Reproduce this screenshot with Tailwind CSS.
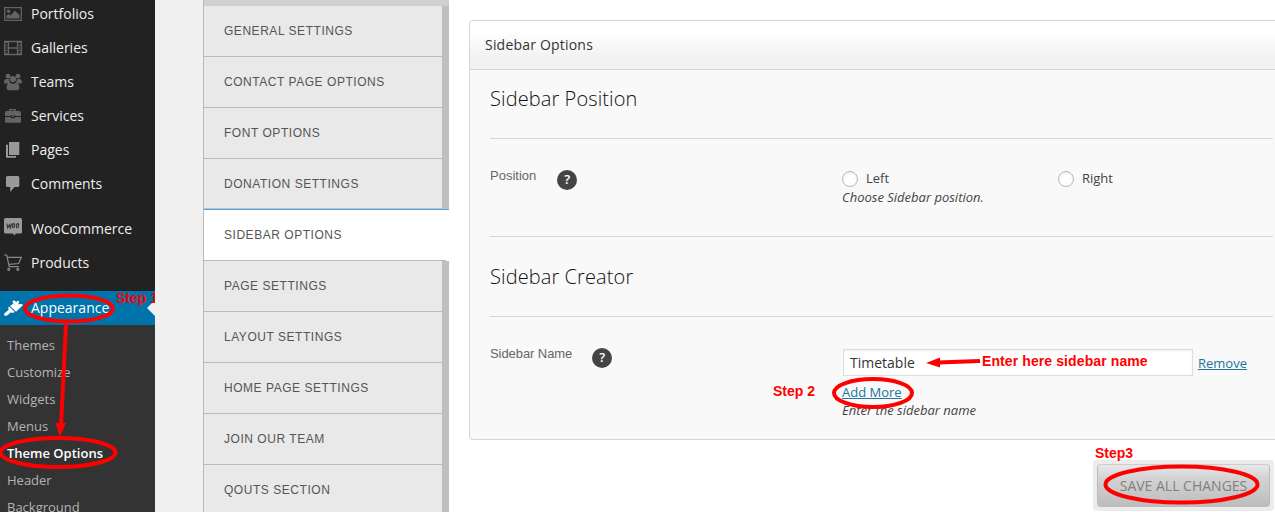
<!DOCTYPE html>
<html lang="en">
<head>
<meta charset="utf-8">
<title>Theme Options</title>
<script src="https://cdn.jsdelivr.net/npm/@tailwindcss/browser@4"></script>
</head>
<body class="relative h-[512px] w-[1275px] overflow-hidden bg-white font-['Open_Sans',sans-serif]">
<div class="flex h-full">
  <aside class="h-full w-[155px] shrink-0 overflow-hidden bg-[#222] text-sm text-[#eee]">
    <ul class="-mt-[3px]">
      <li class="flex h-[34px] items-center gap-[9px] pl-1"><svg class="size-[18px] text-[#646464]" viewBox="0 0 18 18" fill="none" stroke="currentColor"><path d="M.7 2.7h16.6v12.6H.7z" stroke-width="1.300"/><path d="M2.500 13.500v-3l2-1.500 2 1.500 4.500-5 4.500 4.500v3.500z" fill="currentColor" stroke="none"/><circle cx="4.500" cy="6.200" r="1.700" fill="currentColor" stroke="none"/></svg><span>Portfolios</span></li>
      <li class="flex h-[34px] items-center gap-[9px] pl-1"><svg class="size-[18px] text-[#646464]" viewBox="0 0 18 18" fill="none" stroke="currentColor"><path d="M.6 2.500h16.800v13H.6zM4.500 2.500v13M13.500 2.500v13M4.500 9h9" stroke-width="1.300"/><path d="M2.500 3v12M15.500 3v12" stroke-width="2.600" stroke-dasharray="1 1.700"/></svg><span>Galleries</span></li>
      <li class="flex h-[34px] items-center gap-[9px] pl-1"><svg class="size-[18px] text-[#646464]" viewBox="0 0 18 18" fill="currentColor"><circle cx="4" cy="3.200" r="2.400"/><circle cx="14" cy="3.200" r="2.400"/><circle cx="9" cy="6" r="3.100"/><path d="M0 9c0-2 1-3 3-3h2.200c-.2 2 .4 3 1.300 3.700L4 10.500H1Q0 10.500 0 9zM18 9c0-2-1-3-3-3h-2.200c.2 2-.4 3-1.300 3.700l2.500.8h3q1 0 1-1.500zM2.600 15c0-3 .9-4.800 3.300-5.200 2 1.300 4.200 1.300 6.200 0 2.400.4 3.300 2.200 3.300 5.200 0 1.300-.9 2.200-2.200 2.200H4.800c-1.300 0-2.200-.9-2.200-2.200z"/></svg><span>Teams</span></li>
      <li class="flex h-[34px] items-center gap-[9px] pl-1"><svg class="size-[18px] text-[#646464]" viewBox="0 0 18 18" fill="currentColor"><path d="M5 4V2.600Q5 2 5.700 2h5.600q.7 0 .7.600V4h3.500Q17 4 17 5.500V9h-5.500v-.500h-5V9H1V5.500Q1 4 2.500 4zM6.300 4h4.400v-.8H6.300z" fill-rule="evenodd"/><path d="M1 9.900h6v1.300h4V9.900h6v4.600q0 1.300-1.400 1.300H2.400Q1 15.800 1 14.500zM8 9.300h2v1H8z"/></svg><span>Services</span></li>
      <li class="flex h-[34px] items-center gap-[9px] pl-1"><svg class="size-[18px] text-[#999]" viewBox="0 0 18 18" fill="currentColor"><path d="M5 1h10.300v13H5z"/><path d="M2 3.800h2V15h8v1.800H2z"/></svg><span>Pages</span></li>
      <li class="flex h-[34px] items-center gap-[9px] pl-1"><svg class="size-[18px] text-[#999]" viewBox="0 0 18 18" fill="currentColor"><path d="M3.500 1h10.300Q15.300 1 15.300 2.500v8q0 1.500-1.500 1.500h-3.300L6.200 17v-5H3.500Q2 12 2 10.500v-8Q2 1 3.500 1z"/></svg><span>Comments</span></li>
      <li class="mt-[11px] flex h-[34px] items-center gap-[9px] pl-1"><svg class="size-[18px] overflow-visible text-[#999]" viewBox="0 0 18 18" fill="currentColor"><path d="M1.500-2h15Q18-2 18-.5v12.500q0 1.500-1.500 1.500h-5l-.5 2-2.500-2h-7Q0 13.500 0 12V-.5Q0-2 1.500-2z"/><path d="m2.800 3.500.9 4.400 1.700-3.200.8 3.200 1.400-4.600M9.900 3.600c-1.700 0-2.100 4-.7 4 1.500 0 2-4 .7-4zM13.900 3.600c-1.700 0-2.100 4-.7 4 1.500 0 2-4 .7-4z" fill="none" stroke="#333" stroke-width="1.100"/></svg><span>WooCommerce</span></li>
      <li class="flex h-[34px] items-center gap-[9px] pl-1"><svg class="size-[18px] text-[#888]" viewBox="0 0 18 18" fill="none" stroke="currentColor" stroke-width="1.200"><path d="M0 1h2.700l2.500 11.700h9.800M3.300 3.300h14l-2.600 6.200-10 .9"/><circle cx="4.800" cy="15.300" r="1"/><circle cx="13.800" cy="15.300" r="1"/></svg><span>Products</span></li>
      <li class="relative mt-[11px] flex h-[34px] items-center gap-[9px] bg-[#0073aa] pl-1 text-white"><svg class="size-[18px] overflow-visible" viewBox="0 0 18 18" fill="currentColor"><path d="m8.300 2.500 1.800-1.300 2.100 1.800 1.800-1.600 1.300 1.600-1.200 2.200 4.300-.2.200 1.500-6.600 6.200-5.900-5.600 3.300-2.600z"/><path d="m5.200 7.500 5.600 5.400-1.300.8c-1.300.3-1.700-.5-2.700-.2-1.500.5-2.800 3.500-5.500 3.300C0 16.700-.5 15.200.5 14.300l3.700-3.100c1-.9 0-1.700 0-2.600z"/></svg><span>Appearance</span><span class="absolute top-[9px] right-0 border-y-8 border-r-8 border-y-transparent border-r-[#f0f0f0]"></span></li>
    </ul>
    <ul class="h-[200px] bg-[#333] pt-[7px] pl-[7px] text-[13px] leading-[27px] text-[#b4b4b4]">
      <li>Themes</li><li>Customize</li><li>Widgets</li><li>Menus</li><li class="font-semibold text-white">Theme Options</li><li>Header</li><li>Background</li>
    </ul>
  </aside>
  <div class="w-12 shrink-0 bg-[#f0f0f0]"></div>
  <nav class="h-full w-[246px] shrink-0 overflow-hidden border-l border-[#bbb] bg-[#c0bebf] font-['Liberation_Sans',sans-serif] text-xs tracking-[.54px] text-[#555]">
    <div class="h-1.5 bg-[#d0d0d0]"></div>
    <ul class="[&>li]:h-[51px] [&>li]:pl-5 [&>li]:leading-[50px]">
      <li class="mr-[7px] border-b border-[#bbb] bg-[#e9e9e9]">GENERAL SETTINGS</li>
      <li class="mr-[7px] border-b border-[#bbb] bg-[#e9e9e9]">CONTACT PAGE OPTIONS</li>
      <li class="mr-[7px] border-b border-[#bbb] bg-[#e9e9e9]">FONT OPTIONS</li>
      <li class="mr-[7px] bg-[#e9e9e9]">DONATION SETTINGS</li>
      <li class="relative bg-white shadow-[0_-1px_0_#5b9dd9,0_-2px_0_#b3c7d6]">SIDEBAR OPTIONS<span class="absolute bottom-0 left-0 h-px w-[242px] bg-[#bbb]"></span></li>
      <li class="mr-[7px] border-b border-[#bbb] bg-[#e9e9e9]">PAGE SETTINGS</li>
      <li class="mr-[7px] border-b border-[#bbb] bg-[#e9e9e9]">LAYOUT SETTINGS</li>
      <li class="mr-[7px] border-b border-[#bbb] bg-[#e9e9e9]">HOME PAGE SETTINGS</li>
      <li class="mr-[7px] border-b border-[#bbb] bg-[#e9e9e9]">JOIN OUR TEAM</li>
      <li class="mr-[7px] border-b border-[#bbb] bg-[#e9e9e9]">QOUTS SECTION</li>
    </ul>
  </nav>
  <main class="flex h-full min-w-0 flex-1 flex-col pt-5 pl-5">
    <section class="h-[420px] w-[830px] shrink-0 rounded border border-[#d5d5d5] bg-[#f9f9f9]">
      <h2 class="h-[49px] rounded-t border-b border-[#d5d5d5] bg-linear-to-b from-white from-20% to-[#f1f1f1] to-80% pl-[15px] text-sm leading-[48px] font-medium tracking-[.2px] text-[#333]">Sidebar Options</h2>
      <div class="ml-5 w-[783px] text-[13px] text-[#444]">
        <h3 class="h-[69px] border-b border-[#d7d7d7] pt-[14px] text-xl leading-[30px] font-light tracking-[.1px] text-[#111]">Sidebar Position</h3>
        <div class="flex h-[98px] border-b border-[#d7d7d7]">
          <div class="flex w-[353px] shrink-0 items-start"><span class="pt-[27px] font-['Liberation_Sans',sans-serif] leading-5 text-[#666]">Position</span><span class="mt-[31px] ml-[21px] flex size-5 items-center justify-center rounded-full bg-[#444] text-[13px] font-semibold text-white">?</span></div>
          <div class="-ml-px pt-[31px]">
            <div class="flex h-[18px] items-center">
              <label class="flex w-[216px] items-center gap-2"><span class="size-4 rounded-full border border-[#b4b9be] bg-white shadow-[inset_0_1px_2px_rgba(0,0,0,0.1)]"></span>Left</label>
              <label class="flex items-center gap-2"><span class="size-4 rounded-full border border-[#b4b9be] bg-white shadow-[inset_0_1px_2px_rgba(0,0,0,0.1)]"></span>Right</label>
            </div>
            <p class="leading-[19px] italic">Choose Sidebar position.</p>
          </div>
        </div>
        <h3 class="h-[80px] border-b border-[#d7d7d7] pt-[25px] text-xl leading-[30px] font-light tracking-[.1px] text-[#111]">Sidebar Creator</h3>
        <div class="flex">
          <div class="flex w-[353px] shrink-0 items-start"><span class="pt-[27px] font-['Liberation_Sans',sans-serif] leading-5 tracking-[-.07px] text-[#666]">Sidebar Name</span><span class="mt-[31px] ml-5 flex size-5 items-center justify-center rounded-full bg-[#444] text-[13px] font-semibold text-white">?</span></div>
          <div class="shrink-0 pt-8">
            <div class="flex h-[27px] items-center gap-[5px]"><span class="h-[27px] w-[350px] shrink-0 border border-[#ddd] bg-white pl-1.5 text-sm leading-[26px] text-[#333] shadow-[inset_0_1px_2px_rgba(0,0,0,0.07)]">Timetable</span><a class="pt-0.5 text-[#21759b] underline">Remove</a></div>
            <p class="-ml-px pt-[7px] leading-[18px]"><a class="text-[#21759b] underline">Add More</a></p>
            <p class="-ml-px leading-[18px] italic">Enter the sidebar name</p>
          </div>
        </div>
      </div>
    </section>
    <div class="mt-5 ml-[624px] h-[51px] w-[181px] shrink-0 rounded bg-[#ececec] p-1">
      <button class="block h-[43px] w-[173px] rounded border border-[#bbb] border-t-[#ccc] bg-linear-to-b from-[#e8e8e8] via-[#d4d4d4] via-30% to-[#bdbdbd] text-sm text-[#808080]">SAVE ALL CHANGES</button>
    </div>
  </main>
</div>
<svg class="absolute inset-0" width="1275" height="512" fill="none" stroke="red" stroke-width="4">
  <ellipse cx="69" cy="308.500" rx="44" ry="13"/>
  <path d="M66 324 61 426"/>
  <path d="M55.500 423 60 437l6-14z" fill="red" stroke="none"/>
  <ellipse cx="58" cy="452.500" rx="57.500" ry="14.500"/>
  <path d="m980 361-42 1.500"/>
  <path d="m926 363 14-5.500v10z" fill="red" stroke="none"/>
  <ellipse cx="873" cy="393" rx="39" ry="14"/>
  <ellipse cx="1181.500" cy="484.500" rx="76" ry="18"/>
</svg>
<div class="font-['Liberation_Sans',sans-serif] text-sm leading-4 font-bold whitespace-nowrap text-[#f00]">
  <span class="absolute top-[290px] left-[116px] w-[39px] overflow-hidden">Step 1</span>
  <span class="absolute top-[353px] left-[982px] tracking-[.1px]">Enter here sidebar name</span>
  <span class="absolute top-[383px] left-[773px]">Step 2</span>
  <span class="absolute top-[445px] left-[1095px]">Step3</span>
</div>
</body>
</html>
